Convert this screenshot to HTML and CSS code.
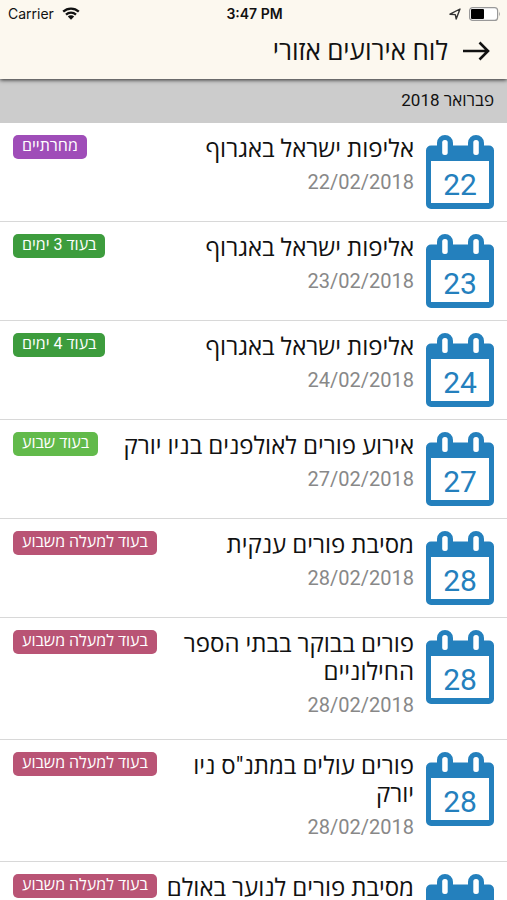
FILE: index.html
```html
<!DOCTYPE html>
<html lang="he" dir="rtl">
<head>
  <meta charset="UTF-8">
  <meta name="viewport" content="width=device-width, initial-scale=1.0">
  <title>לוח אירועים אזורי</title>
  <link rel="stylesheet" href="styles.css">
</head>
<body>

  <svg class="symbols" aria-hidden="true">
    <symbol id="calendar" viewBox="0 0 68 74">
      <path fill="#2480bd" d="M5 10.500H11V8A8 8 0 0 1 27 8V10.500H42V8A8 8 0 0 1 58 8V10.500H63A5 5 0 0 1 68 15.500V69A5 5 0 0 1 63 74H5A5 5 0 0 1 0 69V15.500A5 5 0 0 1 5 10.500Z"/>
      <path fill="#fff" d="M5 26H63V68H5Z"/>
      <rect fill="#fff" x="16.200" y="5" width="5.500" height="15" rx="2.500"/>
      <rect fill="#fff" x="47.300" y="5" width="5.500" height="15" rx="2.500"/>
    </symbol>
  </svg>

  <header class="header">
    <div class="status-bar" dir="ltr">
      <div class="carrier">
        <span>Carrier</span>
        <svg width="18" height="13" viewBox="0 0 18 13">
          <path d="M1.200 4.600A11.500 11.500 0 0 1 16.800 4.600M4 7.600A7.400 7.400 0 0 1 14 7.600" fill="none" stroke="#111" stroke-width="2.300"/>
          <path d="M9 12.800L5.800 9.500A4.600 4.600 0 0 1 12.200 9.500Z" fill="#111"/>
        </svg>
      </div>
      <div class="clock">3:47 PM</div>
      <div class="indicators">
        <svg width="12" height="12" viewBox="0 0 12 12">
          <path d="M1 6.200L11 1L7.200 11L6.300 6.600Z" fill="none" stroke="#333" stroke-width="1.400" stroke-linejoin="round"/>
        </svg>
        <svg width="32" height="14" viewBox="0 0 32 14">
          <rect x="0.600" y="0.600" width="28" height="12.800" rx="3" fill="#fff" stroke="#999" stroke-width="1.200"/>
          <rect x="2" y="2" width="13" height="10" rx="1" fill="#000"/>
          <path d="M30 4.500Q31.800 7 30 9.500Z" fill="#999"/>
        </svg>
      </div>
    </div>
    <div class="title-bar">
      <button class="back" type="button" aria-label="חזרה">
        <svg width="28" height="20" viewBox="0 0 28 20">
          <path d="M1 10H26M17.500 1.500L26 10L17.500 18.500" fill="none" stroke="#111" stroke-width="2.600"/>
        </svg>
      </button>
      <h1>לוח אירועים אזורי</h1>
    </div>
  </header>

  <main class="events">
    <h2 class="month">פברואר 2018</h2>
    <ul>
      <li class="event">
        <div class="day"><svg><use href="#calendar"/></svg><span>22</span></div>
        <div class="details">
          <h3>אליפות ישראל באגרוף</h3>
          <time datetime="2018-02-22">22/02/2018</time>
        </div>
        <span class="badge badge-purple">מחרתיים</span>
      </li>
      <li class="event">
        <div class="day"><svg><use href="#calendar"/></svg><span>23</span></div>
        <div class="details">
          <h3>אליפות ישראל באגרוף</h3>
          <time datetime="2018-02-23">23/02/2018</time>
        </div>
        <span class="badge badge-green">בעוד 3 ימים</span>
      </li>
      <li class="event">
        <div class="day"><svg><use href="#calendar"/></svg><span>24</span></div>
        <div class="details">
          <h3>אליפות ישראל באגרוף</h3>
          <time datetime="2018-02-24">24/02/2018</time>
        </div>
        <span class="badge badge-green">בעוד 4 ימים</span>
      </li>
      <li class="event">
        <div class="day"><svg><use href="#calendar"/></svg><span>27</span></div>
        <div class="details">
          <h3>אירוע פורים לאולפנים בניו יורק</h3>
          <time datetime="2018-02-27">27/02/2018</time>
        </div>
        <span class="badge badge-lime">בעוד שבוע</span>
      </li>
      <li class="event">
        <div class="day"><svg><use href="#calendar"/></svg><span>28</span></div>
        <div class="details">
          <h3>מסיבת פורים ענקית</h3>
          <time datetime="2018-02-28">28/02/2018</time>
        </div>
        <span class="badge badge-pink">בעוד למעלה משבוע</span>
      </li>
      <li class="event">
        <div class="day"><svg><use href="#calendar"/></svg><span>28</span></div>
        <div class="details">
          <h3>פורים בבוקר בבתי הספר החילוניים</h3>
          <time datetime="2018-02-28">28/02/2018</time>
        </div>
        <span class="badge badge-pink">בעוד למעלה משבוע</span>
      </li>
      <li class="event">
        <div class="day"><svg><use href="#calendar"/></svg><span>28</span></div>
        <div class="details">
          <h3>פורים עולים במתנ"ס ניו יורק</h3>
          <time datetime="2018-02-28">28/02/2018</time>
        </div>
        <span class="badge badge-pink">בעוד למעלה משבוע</span>
      </li>
      <li class="event">
        <div class="day"><svg><use href="#calendar"/></svg></div>
        <div class="details">
          <h3>מסיבת פורים לנוער באולם</h3>
        </div>
        <span class="badge badge-pink">בעוד למעלה משבוע</span>
      </li>
    </ul>
  </main>

</body>
</html>
```
FILE: styles.css
```css
* {
  box-sizing: border-box;
}

body {
  margin: 0;
  height: 100vh;
  display: flex;
  flex-direction: column;
  overflow: hidden;
  background-color: #fff;
  color: #111;
  font-family: Roboto, "Open Sans", sans-serif;
}

h1,
h2,
h3,
ul {
  margin: 0;
  padding: 0;
  font-weight: 400;
}

.symbols {
  position: absolute;
  width: 0;
  height: 0;
}

/* header */
.header {
  position: relative;
  z-index: 1;
  flex: none;
  background-color: #fcf8ef;
  box-shadow: 0 1px 4px rgba(0, 0, 0, 0.8);
}

.status-bar {
  display: grid;
  grid-template-columns: 1fr auto 1fr;
  align-items: center;
  height: 27px;
  padding: 0 6px 0 8px;
  font-family: Inter, sans-serif;
  font-size: 14px;
}

.carrier,
.indicators {
  display: flex;
  align-items: center;
  gap: 8px;
}

.indicators {
  justify-content: flex-end;
}

.clock {
  font-weight: 600;
}

.title-bar {
  display: flex;
  align-items: center;
  gap: 14px;
  height: 52px;
  padding: 0 17px 4px;
}

.back {
  display: flex;
  padding: 0;
  border: none;
  background: none;
  cursor: pointer;
}

.title-bar h1 {
  font-size: 26px;
  line-height: 36px;
}

/* event list */
.events {
  flex: 1;
  overflow-y: auto;
  scrollbar-width: none;
}

.month {
  height: 44px;
  padding: 0 13px;
  background-color: #ccc;
  font-size: 17px;
  line-height: 42px;
}

.events ul {
  list-style: none;
}

.event {
  display: flex;
  align-items: flex-start;
  gap: 6px;
  padding: 12px 13px 0;
  border-bottom: 1px solid #d8d8d8;
}

.day {
  position: relative;
  flex: none;
  width: 68px;
  height: 86px;
  margin-left: 6px;
}

.day svg {
  display: block;
  width: 68px;
  height: 74px;
}

.day span {
  position: absolute;
  top: 33px;
  left: 0;
  right: 0;
  color: #2480bd;
  font-size: 30px;
  line-height: 34px;
  text-align: center;
}

.details {
  flex: 1;
  padding-bottom: 20px;
}

.details h3 {
  font-size: 24px;
  line-height: 28px;
}

.details time {
  display: block;
  margin-top: 5px;
  color: #888;
  font-size: 20px;
  line-height: 28px;
}

.badge {
  flex: none;
  height: 24px;
  padding: 0 9px;
  border-radius: 5px;
  color: #fff;
  font-size: 16px;
  line-height: 22px;
  white-space: nowrap;
}

.badge-purple {
  background-color: #9f4db8;
}

.badge-green {
  background-color: #3d9c3d;
}

.badge-lime {
  background-color: #62ba4b;
}

.badge-pink {
  background-color: #b95475;
}
```
